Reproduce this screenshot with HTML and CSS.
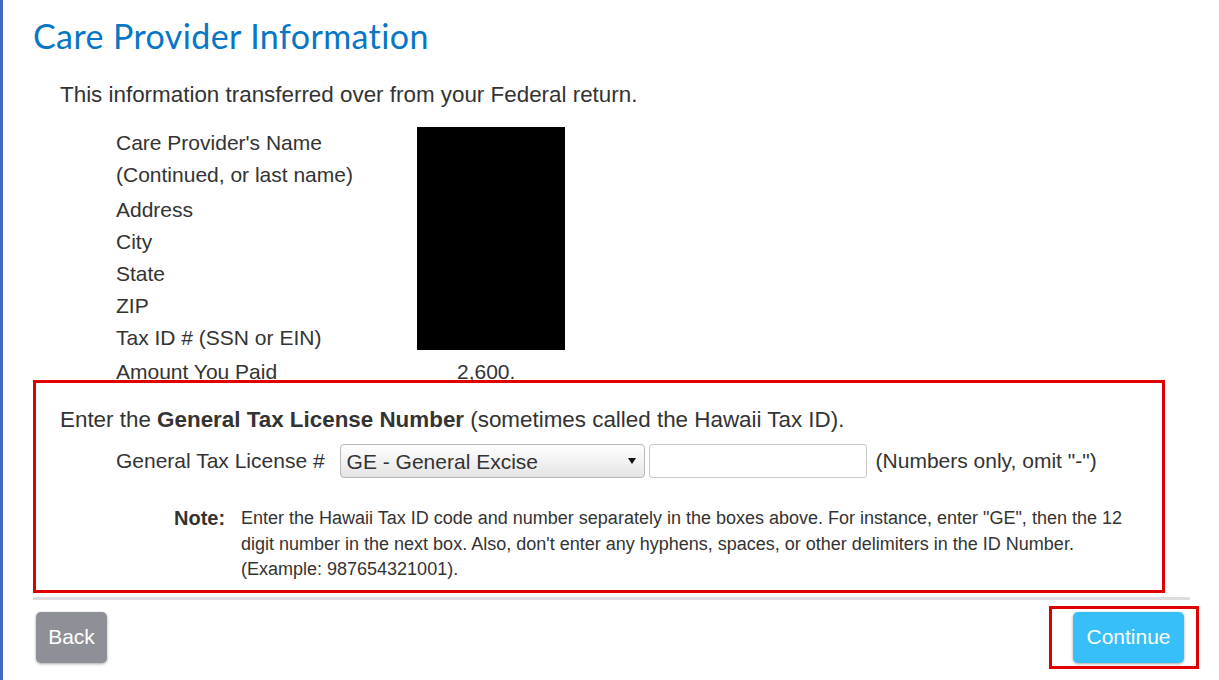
FILE: index.html
```html
<!DOCTYPE html>
<html lang="en">
<head>
  <meta charset="UTF-8" />
  <meta name="viewport" content="width=device-width, initial-scale=1.0"/>
  <title>Care Provider Information</title>
  <link rel="stylesheet" href="styles.css">
</head>
<body>
  <div class="page">
    <h1 class="title">Care Provider Information</h1>

    <p class="intro">This information transferred over from your Federal return.</p>

    <div class="details">
      <div class="label">Care Provider's Name</div>
      <div class="redacted"></div>
      <div class="label">(Continued, or last name)</div>
      <div class="label">Address</div>
      <div class="label">City</div>
      <div class="label">State</div>
      <div class="label">ZIP</div>
      <div class="label">Tax ID # (SSN or EIN)</div>
      <div class="label last">Amount You Paid</div>
      <div class="amount">2,600.</div>
    </div>

    <div class="license highlight">
      <p class="license-intro">Enter the <strong>General Tax License Number</strong> (sometimes called the Hawaii Tax ID).</p>

      <div class="license-row">
        <label for="taxCode">General Tax License #</label>
        <div class="select-wrap">
          <select id="taxCode" name="taxCode">
            <option value="GE">GE - General Excise</option>
          </select>
          <span class="arrow"></span>
        </div>
        <input type="text" id="taxNumber" name="taxNumber">
        <span class="hint">(Numbers only, omit "-")</span>
      </div>

      <div class="note">
        <div class="note-label">Note:</div>
        <div class="note-text">Enter the Hawaii Tax ID code and number separately in the boxes above. For instance, enter "GE", then the 12 digit number in the next box. Also, don't enter any hyphens, spaces, or other delimiters in the ID Number. (Example: 987654321001).</div>
      </div>
    </div>

    <div class="actions">
      <button class="btn btn-back" type="button">Back</button>
      <div class="highlight continue-wrap">
        <button class="btn btn-continue" type="button">Continue</button>
      </div>
    </div>
  </div>
</body>
</html>
```

FILE: styles.css
```css
* {
  box-sizing: border-box;
}

body {
  margin: 0;
  font-family: 'Liberation Sans', Arial, sans-serif;
  color: #333;
  background: #fff;
  min-height: 100vh;
  border-left: 3px solid #4069bd;
}

.page {
  padding: 18px 29px 0 30px;
}

.title {
  margin: 0;
  font-family: Lato, 'Open Sans', sans-serif;
  font-size: 34px;
  line-height: 36px;
  font-weight: 400;
  color: #0776c6;
  letter-spacing: 0.4px;
}

.intro {
  margin: 28px 0 19px 27px;
  font-size: 22.4px;
  line-height: 26px;
}

.details {
  display: grid;
  grid-template-columns: 301px 148px;
  grid-template-rows: 32px 35px repeat(6, 32px);
  padding-left: 83px;
  font-size: 21px;
}

.label {
  grid-column: 1;
  line-height: 32px;
  white-space: nowrap;
}

.label.last,
.amount {
  padding-top: 2px;
}

.redacted {
  grid-column: 2;
  grid-row: 1 / span 7;
  height: 223px;
  background: #000;
}

.amount {
  grid-column: 2;
  grid-row: 8;
  line-height: 32px;
  padding-left: 40px;
}

.highlight {
  position: relative;
}

.highlight::after {
  content: "";
  position: absolute;
  inset: 0;
  border: 3px solid #e00000;
  pointer-events: none;
}

.license {
  margin-top: -6px;
  width: 1132px;
  padding: 27px 0 10px 27px;
}

.license-intro {
  margin: 0;
  font-size: 22.4px;
  line-height: 26px;
}

.license-row {
  display: flex;
  align-items: center;
  margin-top: 11px;
  padding-left: 56px;
  font-size: 21px;
}

.license-row label {
  margin-right: 15px;
}

.select-wrap {
  position: relative;
}

select {
  appearance: none;
  -webkit-appearance: none;
  width: 305px;
  height: 34px;
  padding: 0 0 0 6px;
  font-family: inherit;
  font-size: 21px;
  color: #333;
  border: 1px solid #b8b8b8;
  border-radius: 4px;
  background: linear-gradient(to bottom, #ffffff, #e4e4e4);
}

.arrow {
  position: absolute;
  right: 9px;
  top: 14px;
  border-left: 4px solid transparent;
  border-right: 4px solid transparent;
  border-top: 6px solid #111;
  pointer-events: none;
}

input {
  width: 218px;
  height: 34px;
  margin-left: 4px;
  border: 1px solid #c8c8c8;
  border-radius: 3px;
  font-size: 18px;
  background: #fff;
}

.hint {
  margin-left: 9px;
}

.note {
  display: flex;
  margin-top: 28px;
  padding-left: 114px;
}

.note-label {
  width: 67px;
  font-size: 20px;
  font-weight: 700;
  line-height: 25px;
}

.note-text {
  width: 900px;
  font-size: 18px;
  line-height: 25.5px;
}

.actions {
  display: flex;
  justify-content: space-between;
  align-items: center;
  margin-top: 4px;
  padding: 6px 6px 0 3px;
  border-top: 3px solid #dddddd;
}

.continue-wrap {
  margin-right: -15px;
  padding: 6px 15px 6px 24px;
}

.btn {
  height: 51px;
  border: none;
  border-radius: 5px;
  color: #fff;
  font-family: inherit;
  font-size: 21px;
  box-shadow: 0 1px 3px rgba(0, 0, 0, 0.35);
  cursor: pointer;
}

.btn-back {
  width: 71px;
  background: #8e9097;
}

.btn-continue {
  width: 111px;
  background: #37bff9;
}
```
